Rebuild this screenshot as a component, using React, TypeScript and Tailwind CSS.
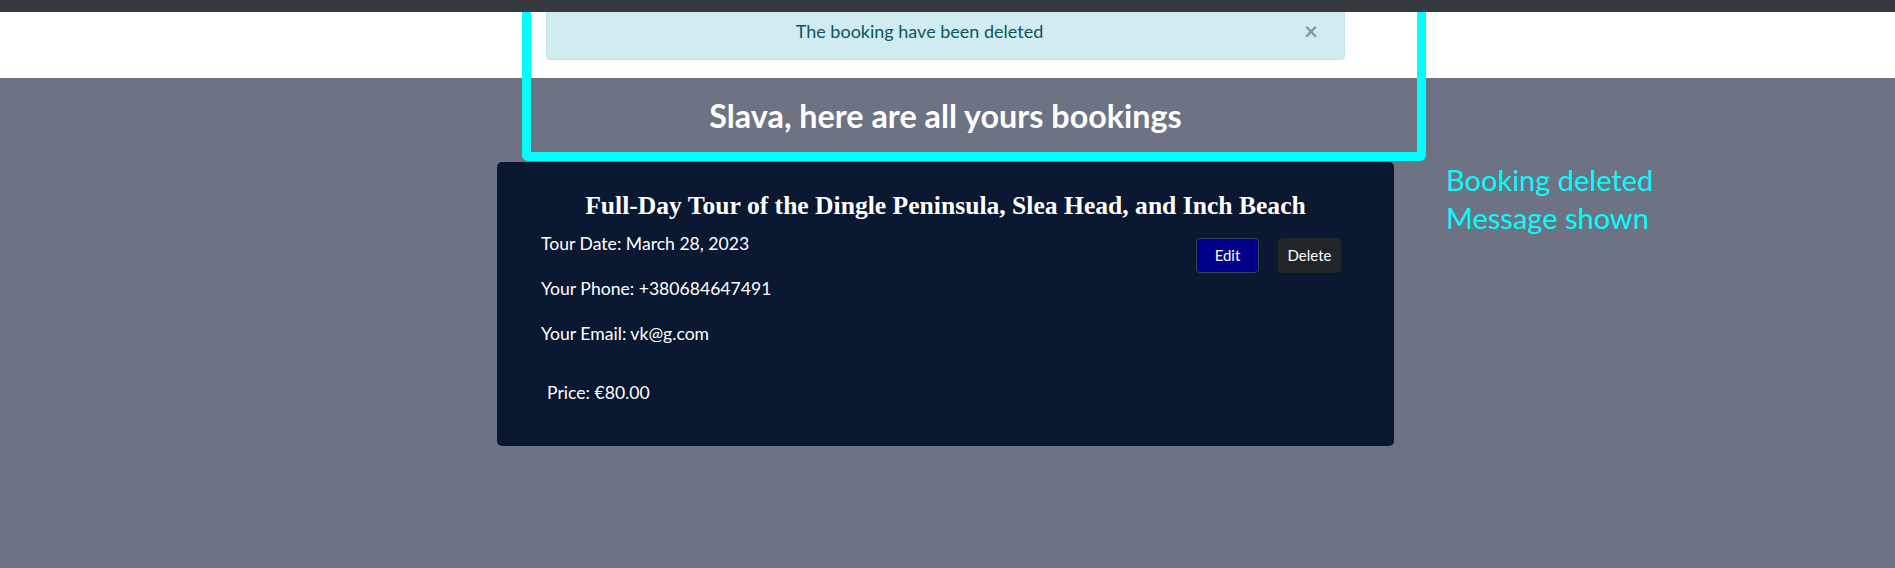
import React from "react";

const booking = {
  title: "Full-Day Tour of the Dingle Peninsula, Slea Head, and Inch Beach",
  date: "March 28, 2023",
  phone: "+380684647491",
  email: "vk@g.com",
  price: "€80.00",
};

const sans = "font-['Lato','Noto_Sans',sans-serif]";

export default function App() {
  return (
    <div className={`relative min-h-[568px] w-full bg-[#6d7383] ${sans}`}>
      {/* fixed navbar sitting over the message */}
      <div className="absolute left-0 top-0 z-10 h-[12px] w-full bg-[#343a40]" />

      <div className="bg-white pb-[18px] pt-[2px] pr-[4px]">
        <div className="relative mx-auto flex h-[58px] w-[799px] items-center justify-center rounded border border-[#bee5eb] bg-[#d1ecf1] pr-[52px] text-[18px] text-[#0c5460]">
          The booking have been deleted
          <button className="absolute right-[26px] top-1/2 -translate-y-1/2 text-[24px] font-bold leading-none text-[#0c5460] opacity-50">
            ×
          </button>
        </div>
      </div>

      <main className="flex flex-col items-center pr-[4px]">
        <h2 className="mt-[19px] text-[32.3px] font-bold leading-[38px] text-white">
          Slava, here are all yours bookings
        </h2>

        <div className="mt-[27px] w-[897px] rounded-[5px] bg-[#0a1832] px-[26px] pb-[28px] pt-[28px] text-white">
          <h3 className="text-center font-['Liberation_Serif',serif] text-[25.6px] font-bold leading-[32px]">
            {booking.title}
          </h3>

          <div className="mt-[8px] flex items-start justify-between pl-[18px] pr-[27px]">
            <div className="flex flex-col gap-[18px] text-[17.6px] leading-[27px]">
              <p>Tour Date: {booking.date}</p>
              <p>Your Phone: {booking.phone}</p>
              <p>Your Email: {booking.email}</p>
            </div>
            <div className="mt-[8px] flex gap-[19px] text-[15px]">
              <button className="h-[35px] w-[63px] rounded border border-[#3b4252] bg-[#00008b] text-white">
                Edit
              </button>
              <button className="h-[35px] w-[63px] rounded border border-[#212529] bg-[#212529] text-white">
                Delete
              </button>
            </div>
          </div>

          <div className="mt-[17px] flex h-[54px] items-center bg-[#091730] px-[24px] pt-[4px] text-[17.6px]">
            Price: {booking.price}
          </div>
        </div>
      </main>

      {/* annotation overlay */}
      <div className="pointer-events-none absolute left-[522px] top-[-5px] h-[166px] w-[904px] rounded-[6px] border-[9px] border-[#00ffff]" />
      <div className="pointer-events-none absolute left-[1446px] top-[161px] text-[29px] leading-[38px] text-[#00ffff]">
        <p>Booking deleted</p>
        <p>Message shown</p>
      </div>
    </div>
  );
}
